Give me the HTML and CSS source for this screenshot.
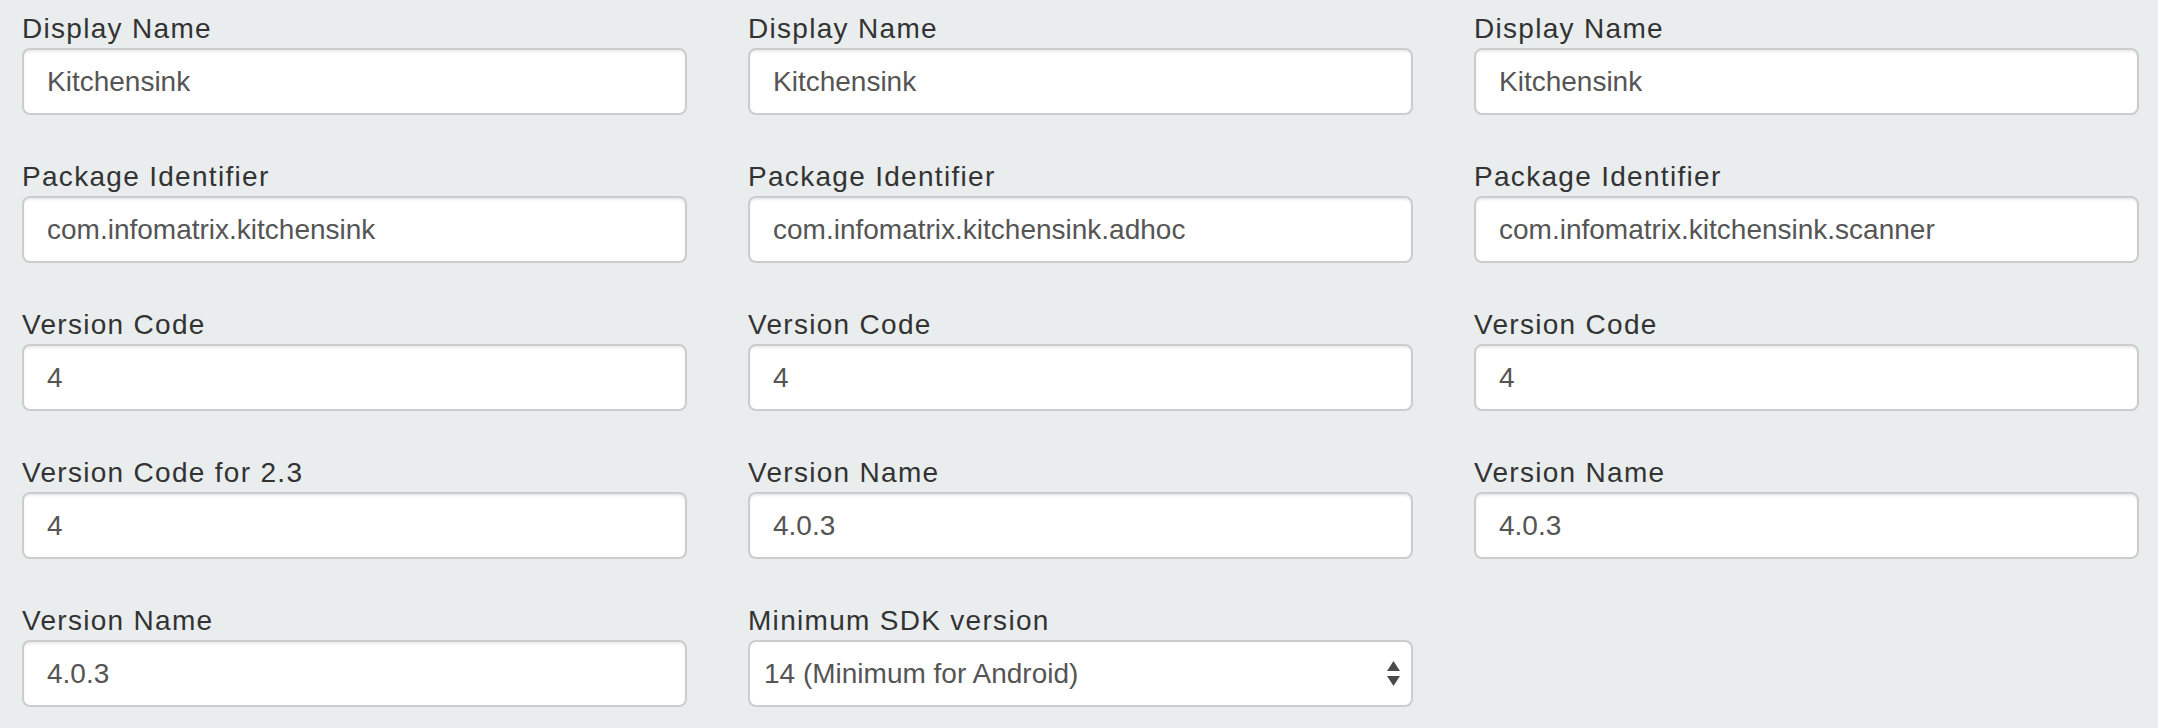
FILE: index.html
```html
<!DOCTYPE html>
<html lang="en">
<head>
<meta charset="utf-8">
<title>App Settings</title>
<link rel="stylesheet" href="styles.css">
</head>
<body>
<form class="settings">
  <div class="column">
    <div class="group"><label class="label">Display Name</label><div class="field">Kitchensink</div></div>
    <div class="group"><label class="label">Package Identifier</label><div class="field">com.infomatrix.kitchensink</div></div>
    <div class="group"><label class="label">Version Code</label><div class="field">4</div></div>
    <div class="group"><label class="label">Version Code for 2.3</label><div class="field">4</div></div>
    <div class="group"><label class="label">Version Name</label><div class="field">4.0.3</div></div>
  </div>
  <div class="column">
    <div class="group"><label class="label">Display Name</label><div class="field">Kitchensink</div></div>
    <div class="group"><label class="label">Package Identifier</label><div class="field">com.infomatrix.kitchensink.adhoc</div></div>
    <div class="group"><label class="label">Version Code</label><div class="field">4</div></div>
    <div class="group"><label class="label">Version Name</label><div class="field">4.0.3</div></div>
    <div class="group"><label class="label">Minimum SDK version</label>
      <div class="field select"><span>14 (Minimum for Android)</span>
        <svg class="arrows" width="13" height="25" viewBox="0 0 13 25"><polygon points="0,10 6.5,0 13,10"/><polygon points="0,15 13,15 6.5,25"/></svg>
      </div>
    </div>
  </div>
  <div class="column">
    <div class="group"><label class="label">Display Name</label><div class="field">Kitchensink</div></div>
    <div class="group"><label class="label">Package Identifier</label><div class="field">com.infomatrix.kitchensink.scanner</div></div>
    <div class="group"><label class="label">Version Code</label><div class="field">4</div></div>
    <div class="group"><label class="label">Version Name</label><div class="field">4.0.3</div></div>
  </div>
</form>
</body>
</html>
```
FILE: styles.css
```css
html, body {
  margin: 0;
  background: #e9edee;
  font-family: "Liberation Sans", Arial, sans-serif;
}

.settings {
  display: grid;
  grid-template-columns: repeat(3, 665px);
  column-gap: 61px;
  align-items: start;
  padding: 10px 0 0 22px;
  margin: 0;
}

.column {
  display: flex;
  flex-direction: column;
  gap: 43px;
}

.group {
  display: flex;
  flex-direction: column;
}

.label {
  font-size: 28px;
  line-height: 38px;
  letter-spacing: 1.3px;
  color: #333;
}

.field {
  box-sizing: border-box;
  height: 67px;
  border: 2px solid #cccccc;
  border-radius: 8px;
  background: #fff;
  box-shadow: inset 0 2px 2px rgba(0, 0, 0, 0.075);
  font-size: 28px;
  color: #555;
  padding: 0 23px;
  display: flex;
  align-items: center;
  white-space: nowrap;
}

.select {
  justify-content: space-between;
  padding: 0 11px 0 14px;
  box-shadow: none;
}

.arrows {
  fill: #4a4a4a;
  flex: none;
}
```
